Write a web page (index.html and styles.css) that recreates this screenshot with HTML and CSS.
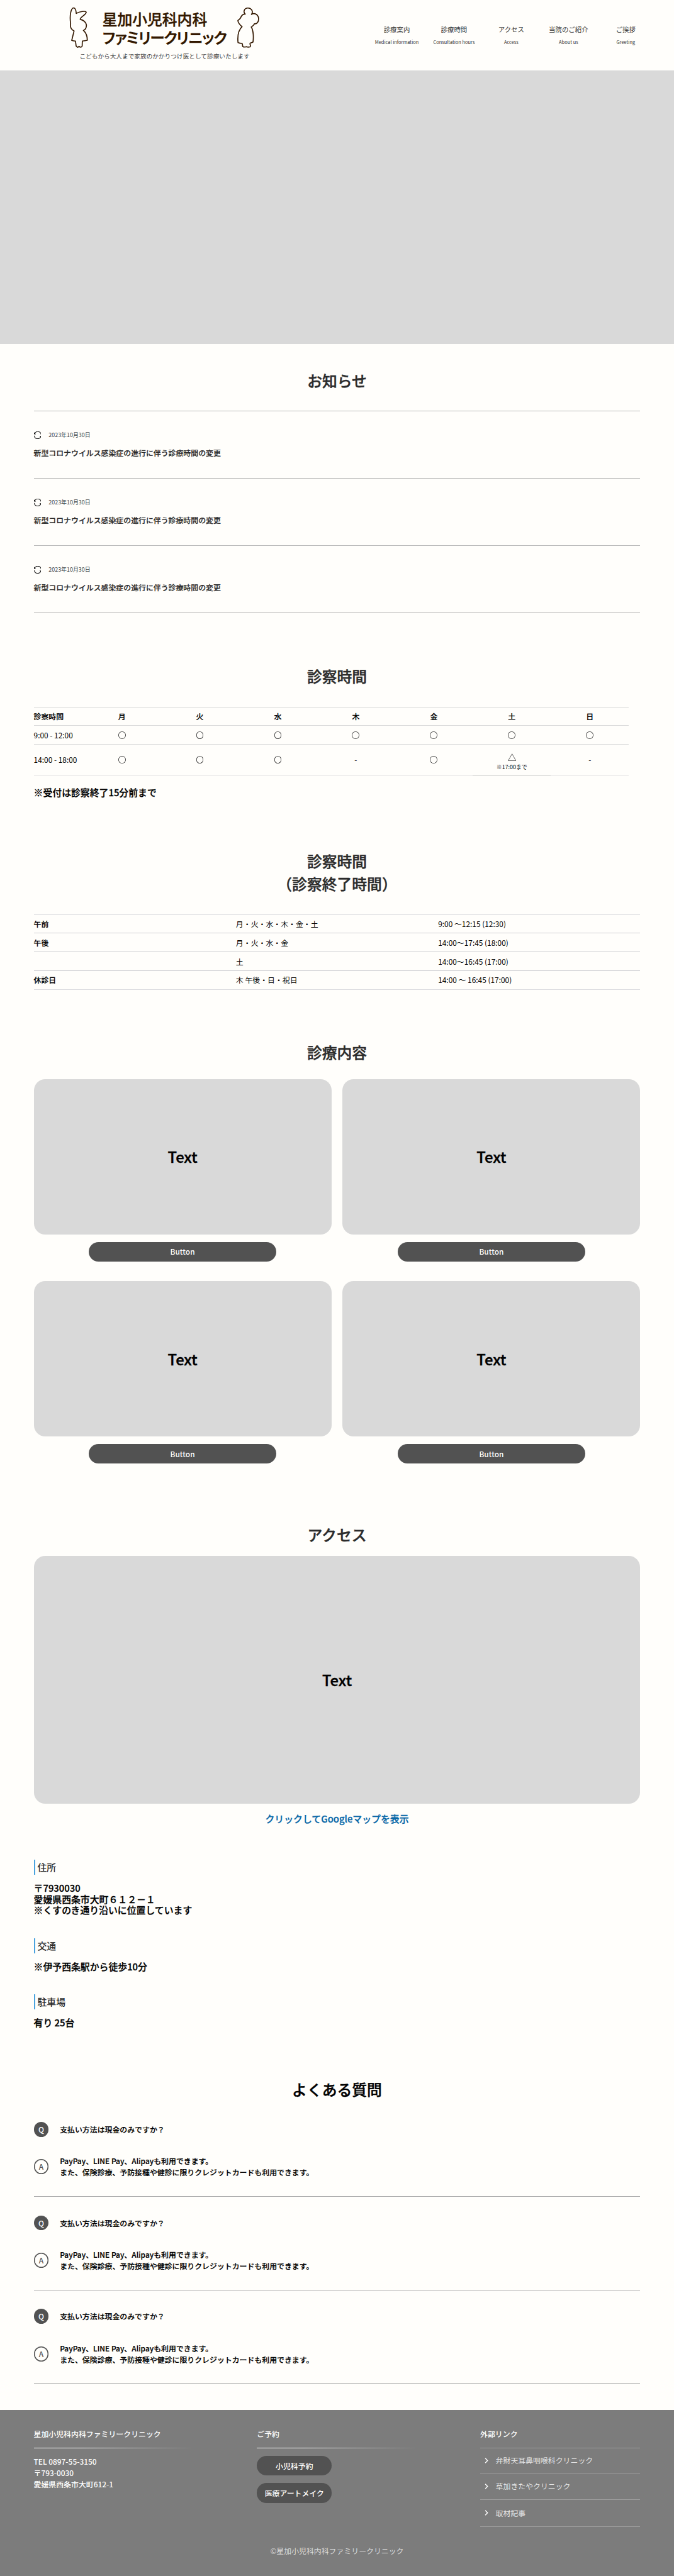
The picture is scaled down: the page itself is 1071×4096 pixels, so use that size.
FILE: index.html
```html
<!DOCTYPE html>
<html lang="ja">
<head>
<meta charset="utf-8">
<title>星加小児科内科ファミリークリニック</title>
<link rel="stylesheet" href="styles.css">
</head>
<body>
<svg width="0" height="0" class="sprite" aria-hidden="true">
  <symbol id="refresh" viewBox="0 0 16 16">
    <path d="M1.2 5.6A7.2 7.2 0 0 1 15.3 7M14.8 10.4A7.2 7.2 0 0 1 .7 9" fill="none" stroke="#111" stroke-width="1.4"/>
    <path d="M0 1.8V6.2H4.2zM16 14.2V9.8H11.8z" fill="#111"/>
  </symbol>
  <symbol id="chevron" viewBox="0 0 8 12">
    <path d="M1.5 1L6.3 6L1.5 11" fill="none" stroke="#fff" stroke-width="1.9"/>
  </symbol>
</svg>

<header class="header">
  <div class="brand">
    <div class="brand-main">
      <svg class="rabbit" viewBox="22 14 122 264">
        <path d="M67 56C66 38 60 20 49 20C33 22 23 70 31 120C27 138 32 158 53 168L38 229Q50 233 62 233L66 264Q72 274 79 272L85 267L91 272Q102 273 105 265L106 233Q124 231 138 228C138 205 130 180 113 165C127 158 133 145 132 129C129 111 110 98 92 93C93 78 128 66 131 49C129 37 87 43 67 56Z"/>
      </svg>
      <h1 class="brand-name"><span class="name-top">星加小児科内科</span><span class="name-bottom">ファミリークリニック</span></h1>
      <svg class="bear" viewBox="1095 14 146 264">
        <path d="M1150 60C1134 44 1146 20 1168 21C1190 22 1204 43 1190 62C1210 48 1236 65 1236 92C1236 112 1224 125 1209 122C1206 134 1196 137 1189 143C1203 165 1204 210 1200 239Q1192 245 1181 246L1181 254Q1187 262 1181 270Q1168 274 1157 269Q1142 274 1134 268L1132 254L1130 248Q1113 248 1104 243C1100 205 1104 165 1130 141C1117 130 1104 120 1103 101C1110 95 1122 88 1122 80C1128 67 1138 60 1150 60Z"/>
      </svg>
    </div>
    <p class="tagline">こどもから大人まで家族のかかりつけ医として診療いたします</p>
  </div>
  <nav class="nav">
    <a class="nav-item"><span>診療案内</span><small>Medical information</small></a>
    <a class="nav-item"><span>診療時間</span><small>Consultation hours</small></a>
    <a class="nav-item"><span>アクセス</span><small>Access</small></a>
    <a class="nav-item"><span>当院のご紹介</span><small>About us</small></a>
    <a class="nav-item"><span>ご挨拶</span><small>Greeting</small></a>
  </nav>
</header>

<div class="hero"></div>

<main class="main">
  <section class="news">
    <h2 class="heading">お知らせ</h2>
    <ul class="news-list">
      <li class="news-item"><div class="news-date"><svg class="refresh"><use href="#refresh"/></svg><time>2023年10月30日</time></div><p class="news-title">新型コロナウイルス感染症の進行に伴う診療時間の変更</p></li>
      <li class="news-item"><div class="news-date"><svg class="refresh"><use href="#refresh"/></svg><time>2023年10月30日</time></div><p class="news-title">新型コロナウイルス感染症の進行に伴う診療時間の変更</p></li>
      <li class="news-item"><div class="news-date"><svg class="refresh"><use href="#refresh"/></svg><time>2023年10月30日</time></div><p class="news-title">新型コロナウイルス感染症の進行に伴う診療時間の変更</p></li>
    </ul>
  </section>

  <section class="hours">
    <h2 class="heading">診察時間</h2>
    <div class="week">
      <div class="week-row week-head"><b>診察時間</b><span>月</span><span>火</span><span>水</span><span>木</span><span>金</span><span>土</span><span>日</span></div>
      <div class="week-row week-am"><b>9:00 - 12:00</b><span><i class="open"></i></span><span><i class="open"></i></span><span><i class="open"></i></span><span><i class="open"></i></span><span><i class="open"></i></span><span><i class="open"></i></span><span><i class="open"></i></span></div>
      <div class="week-row week-pm"><b>14:00 - 18:00</b><span><i class="open"></i></span><span><i class="open"></i></span><span><i class="open"></i></span><span>-</span><span><i class="open"></i></span><span class="partial"><svg class="triangle" viewBox="0 0 18 16"><path d="M9 1L17.3 15.5H.7Z"/></svg><small>※17:00まで</small></span><span>-</span></div>
    </div>
    <p class="hours-note">※受付は診察終了15分前まで</p>
  </section>

  <section class="closing">
    <h2 class="heading">診察時間<br>（診察終了時間）</h2>
    <dl class="closing-table">
      <div class="closing-row"><dt>午前</dt><dd>月・火・水・木・金・土</dd><dd>9:00 〜12:15 (12:30)</dd></div>
      <div class="closing-row"><dt>午後</dt><dd>月・火・水・金</dd><dd>14:00〜17:45 (18:00)</dd></div>
      <div class="closing-row"><dt></dt><dd>土</dd><dd>14:00〜16:45 (17:00)</dd></div>
      <div class="closing-row"><dt>休診日</dt><dd>木 午後・日・祝日</dd><dd>14:00 〜 16:45 (17:00)</dd></div>
    </dl>
  </section>

  <section class="services">
    <h2 class="heading">診療内容</h2>
    <div class="service-grid">
      <article class="service"><div class="placeholder">Text</div><a class="button">Button</a></article>
      <article class="service"><div class="placeholder">Text</div><a class="button">Button</a></article>
      <article class="service"><div class="placeholder">Text</div><a class="button">Button</a></article>
      <article class="service"><div class="placeholder">Text</div><a class="button">Button</a></article>
    </div>
  </section>

  <section class="access">
    <h2 class="heading">アクセス</h2>
    <div class="placeholder map">Text</div>
    <a class="map-link">クリックしてGoogleマップを表示</a>
    <div class="info"><h3>住所</h3><p>〒7930030<br>愛媛県西条市大町６１２－１<br>※くすのき通り沿いに位置しています</p></div>
    <div class="info"><h3>交通</h3><p>※伊予西条駅から徒歩10分</p></div>
    <div class="info"><h3>駐車場</h3><p>有り 25台</p></div>
  </section>

  <section class="faq">
    <h2 class="heading">よくある質問</h2>
    <div class="faq-item"><div class="faq-row"><span class="mark q">Q</span><p>支払い方法は現金のみですか？</p></div><div class="faq-row answer"><span class="mark a">A</span><p>PayPay、LINE Pay、Alipayも利用できます。<br>また、保険診療、予防接種や健診に限りクレジットカードも利用できます。</p></div></div>
    <div class="faq-item"><div class="faq-row"><span class="mark q">Q</span><p>支払い方法は現金のみですか？</p></div><div class="faq-row answer"><span class="mark a">A</span><p>PayPay、LINE Pay、Alipayも利用できます。<br>また、保険診療、予防接種や健診に限りクレジットカードも利用できます。</p></div></div>
    <div class="faq-item"><div class="faq-row"><span class="mark q">Q</span><p>支払い方法は現金のみですか？</p></div><div class="faq-row answer"><span class="mark a">A</span><p>PayPay、LINE Pay、Alipayも利用できます。<br>また、保険診療、予防接種や健診に限りクレジットカードも利用できます。</p></div></div>
  </section>
</main>

<footer class="footer">
  <div class="footer-columns">
    <div class="footer-column">
      <h3>星加小児科内科ファミリークリニック</h3>
      <div class="fade-line"></div>
      <p class="contact">TEL 0897-55-3150<br>〒793-0030<br>愛媛県西条市大町612-1</p>
    </div>
    <div class="footer-column">
      <h3>ご予約</h3>
      <div class="fade-line"></div>
      <a class="button small">小児科予約</a>
      <a class="button small">医療アートメイク</a>
    </div>
    <div class="footer-column">
      <h3>外部リンク</h3>
      <ul class="links">
        <li><svg class="chevron"><use href="#chevron"/></svg>弁財天耳鼻咽喉科クリニック</li>
        <li><svg class="chevron"><use href="#chevron"/></svg>草加きたやクリニック</li>
        <li><svg class="chevron"><use href="#chevron"/></svg>取材記事</li>
      </ul>
    </div>
  </div>
  <p class="copyright">©星加小児科内科ファミリークリニック</p>
</footer>
</body>
</html>
```
FILE: styles.css
```css
* { box-sizing: border-box; margin: 0; padding: 0; }

/* 1rem is ten design pixels */
html { font-size: 7.4375px; }

body {
  font-family: "Noto Sans CJK JP", sans-serif;
  font-size: 1.6rem;
  line-height: 2.4rem;
  color: #000;
  background: #fffefb;
}

ul { list-style: none; }
b, i, small, dt { font-weight: 400; font-style: normal; }
.sprite { position: absolute; }

/* Demi-bold: medium weight, slightly thickened */
.heading, .brand-name, .news-title, .week-head, .hours-note, .closing-row dt,
.placeholder, .map-link, .info p, .faq-item p {
  font-weight: 500;
  -webkit-text-stroke: .018em currentColor;
}

/* Header */
.header { height: 15rem; display: flex; justify-content: space-between; padding-right: 4.2rem; }
.brand { width: 40.6rem; margin-left: 14.8rem; padding-top: 1.45rem; }
.brand-main { display: flex; align-items: flex-start; height: 8.8rem; }
.rabbit { flex: none; width: 4.07rem; height: 8.8rem; }
.bear { flex: none; width: 4.87rem; height: 8.8rem; margin-left: auto; }
.rabbit path, .bear path { fill: none; stroke: #331800; stroke-width: 6.8; stroke-linejoin: round; }
.brand-name { width: 27rem; margin-left: 3rem; padding-top: .6rem; font-size: 3.2rem; line-height: 3.9rem; color: #331800; white-space: nowrap; }
.brand-name span { display: block; }
.name-bottom { font-weight: 700; font-feature-settings: "palt"; letter-spacing: -.2rem; -webkit-text-stroke: 0; }
.tagline { width: 36.2rem; margin: .8rem 0 0 2.2rem; font-size: 1.3rem; line-height: 2rem; letter-spacing: 0; color: #444; white-space: nowrap; }
.nav { display: flex; padding-top: 5rem; }
.nav-item { width: 12.23rem; display: flex; flex-direction: column; align-items: center; color: #333; white-space: nowrap; }
.nav-item span { font-size: 1.4rem; line-height: 2.6rem; }
.nav-item small { font-size: 1rem; line-height: 2.6rem; }

.hero { height: 58.5rem; background: #d9d9d9; }
.main { padding: 0 7.2rem; }
.heading { font-size: 3.2rem; line-height: 4.8rem; text-align: center; color: #2b2b2b; }

/* News */
.news { padding-top: 5.4rem; }
.news-list { margin-top: 4.1rem; border-bottom: 1px solid #a5a5a5; }
.news-item { height: 14.4rem; padding-top: 4.3rem; border-top: .2rem solid #b4b4b4; }
.news-date { display: flex; align-items: center; gap: 1.6rem; height: 1.6rem; font-size: 1.2rem; color: #444; }
.refresh { width: 1.6rem; height: 1.6rem; }
.news-title { margin-top: 1.8rem; color: #2b2b2b; }

/* Weekly hours */
.hours { padding-top: 11rem; }
.week { width: 127.15rem; margin-top: 4.2rem; }
.week-row { display: grid; grid-template-columns: 10.5rem repeat(7, 16.664rem); border-top: 1px solid #dadada; }
.week-row > * { display: flex; align-items: center; justify-content: center; white-space: nowrap; }
.week-row > b { justify-content: flex-start; }
.week-head { height: 3.93rem; }
.week-head > b { font-weight: inherit; }
.week-am { height: 4rem; }
.week-pm { height: 6.7rem; }
.week-pm > * { border-bottom: 1px solid #dadada; }
.open { width: 1.6rem; height: 1.6rem; border-radius: 50%; box-shadow: inset 0 0 0 .11rem #333; }
.week-pm > .partial { flex-direction: column; border-bottom-color: #bbb; }
.triangle { flex: none; width: 1.8rem; height: 1.6rem; margin-top: 1.4rem; }
.triangle path { fill: none; stroke: #333; stroke-width: 1; }
.partial small { margin-top: .1rem; font-size: 1.2rem; line-height: 2.4rem; }
.hours-note { margin-top: 2.1rem; font-size: 2rem; line-height: 3.2rem; }

/* Closing hours */
.closing { padding-top: 10.6rem; }
.closing-table { margin-top: 4.2rem; border-top: 1px solid #dadade; }
.closing-row { display: grid; grid-template-columns: repeat(3, 1fr); align-items: center; height: 4rem; border-bottom: 1px solid #cacace; }
.closing-row:last-child { border-bottom-color: #dadade; }

/* Services */
.services { padding-top: 10.9rem; }
.service-grid { display: grid; grid-template-columns: 1fr 1fr; gap: 4.2rem 2.4rem; margin-top: 3.4rem; }
.service { display: flex; flex-direction: column; align-items: center; gap: 1.6rem; }
.placeholder { width: 100%; height: 33.2rem; display: flex; align-items: center; justify-content: center; border-radius: 2.4rem; background: #d9d9d9; font-size: 3.2rem; }
.button { width: 40rem; height: 4.2rem; display: flex; align-items: center; justify-content: center; border-radius: 2.1rem; background: #525252; color: #fff; font-weight: 500; }

/* Access */
.access { padding-top: 12.8rem; }
.map { height: 52.9rem; margin-top: 2.2rem; }
.map-link { display: block; margin: 1.6rem 0 7.21rem; font-size: 2rem; line-height: 3.2rem; text-align: center; color: #0868a8; }
.info { margin-bottom: 4.8rem; font-size: 2rem; }
.info h3 { margin-bottom: 1.6rem; padding-left: .53rem; border-left: .27rem solid #4aa3df; font-size: 2rem; line-height: 3.2rem; font-weight: 500; color: #2b2b2b; }

/* FAQ */
.faq { padding-top: 5.8rem; }
.faq .heading { margin-bottom: .65rem; color: #000; }
.faq-item { height: 20rem; padding-top: 4rem; border-bottom: .2rem solid #aaa; }
.faq-row { display: flex; align-items: center; gap: 2.4rem; }
.answer { margin-top: 4rem; }
.mark { width: 3.2rem; height: 3.2rem; display: flex; align-items: center; justify-content: center; border-radius: 50%; font-weight: 500; }
.q { background: #525252; color: #fff; }
.a { box-shadow: inset 0 0 0 .2rem #525252; color: #525252; }

/* Footer */
.footer { height: 35.5rem; margin-top: 5.55rem; padding: 3.9rem 7.2rem 0; background: #7c7c7c; color: #fff; }
.footer-columns { display: flex; justify-content: space-between; height: 25rem; }
.footer-column { width: 34.2rem; }
.footer-column h3 { margin-bottom: 1.8rem; font-size: 1.6rem; line-height: 2.4rem; font-weight: 500; }
.fade-line { height: .2rem; margin-bottom: 1.6rem; background: linear-gradient(90deg, #fff 30%, rgba(255, 255, 255, 0)); }
.contact { font-weight: 500; }
.small { width: 16rem; margin-bottom: 1.6rem; }
.links { border-top: 1px solid #9e9e9e; color: #e4e4e4; }
.links li { display: flex; align-items: center; height: 5.4rem; padding-left: .9rem; border-bottom: 1px solid #9e9e9e; }
.links li:nth-child(2) { height: 5.6rem; }
.links li:nth-child(3) { height: 5.8rem; }
.chevron { width: .8rem; height: 1.2rem; margin-right: 1.6rem; }
.copyright { text-align: center; color: #dcdcdc; }
```
